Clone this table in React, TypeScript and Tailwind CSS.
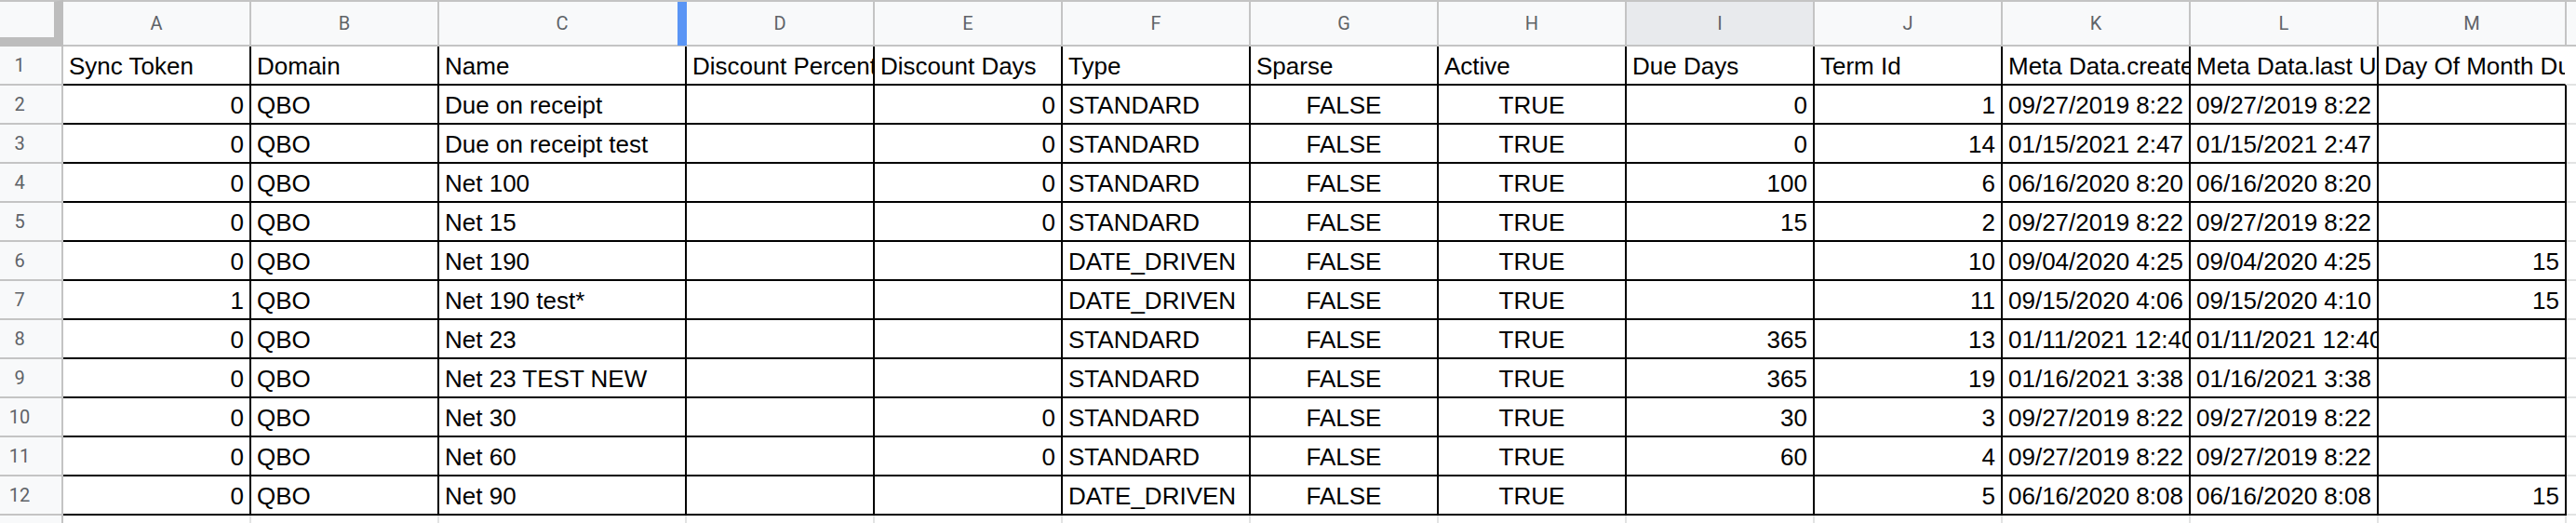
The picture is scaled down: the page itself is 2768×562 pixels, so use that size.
import React from 'react';

type ColDef = { letter: string; w: string; j: string };

const cols: ColDef[] = [
  { letter: 'A', w: 'w-[202px]', j: 'justify-end' },
  { letter: 'B', w: 'w-[202px]', j: 'justify-start' },
  { letter: 'C', w: 'w-[266px]', j: 'justify-start' },
  { letter: 'D', w: 'w-[202px]', j: 'justify-end' },
  { letter: 'E', w: 'w-[202px]', j: 'justify-end' },
  { letter: 'F', w: 'w-[202px]', j: 'justify-start' },
  { letter: 'G', w: 'w-[202px]', j: 'justify-center' },
  { letter: 'H', w: 'w-[202px]', j: 'justify-center' },
  { letter: 'I', w: 'w-[202px]', j: 'justify-end' },
  { letter: 'J', w: 'w-[202px]', j: 'justify-end' },
  { letter: 'K', w: 'w-[202px]', j: 'justify-start' },
  { letter: 'L', w: 'w-[202px]', j: 'justify-start' },
  { letter: 'M', w: 'w-[202px]', j: 'justify-end' },
];

const headerRow = [
  'Sync Token',
  'Domain',
  'Name',
  'Discount Percent',
  'Discount Days',
  'Type',
  'Sparse',
  'Active',
  'Due Days',
  'Term Id',
  'Meta Data.createTime',
  'Meta Data.last UpdatedTime',
  'Day Of Month Due',
];

const rows: string[][] = [
  ['0', 'QBO', 'Due on receipt', '', '0', 'STANDARD', 'FALSE', 'TRUE', '0', '1', '09/27/2019 8:22', '09/27/2019 8:22', ''],
  ['0', 'QBO', 'Due on receipt test', '', '0', 'STANDARD', 'FALSE', 'TRUE', '0', '14', '01/15/2021 2:47', '01/15/2021 2:47', ''],
  ['0', 'QBO', 'Net 100', '', '0', 'STANDARD', 'FALSE', 'TRUE', '100', '6', '06/16/2020 8:20', '06/16/2020 8:20', ''],
  ['0', 'QBO', 'Net 15', '', '0', 'STANDARD', 'FALSE', 'TRUE', '15', '2', '09/27/2019 8:22', '09/27/2019 8:22', ''],
  ['0', 'QBO', 'Net 190', '', '', 'DATE_DRIVEN', 'FALSE', 'TRUE', '', '10', '09/04/2020 4:25', '09/04/2020 4:25', '15'],
  ['1', 'QBO', 'Net 190 test*', '', '', 'DATE_DRIVEN', 'FALSE', 'TRUE', '', '11', '09/15/2020 4:06', '09/15/2020 4:10', '15'],
  ['0', 'QBO', 'Net 23', '', '', 'STANDARD', 'FALSE', 'TRUE', '365', '13', '01/11/2021 12:40', '01/11/2021 12:40', ''],
  ['0', 'QBO', 'Net 23 TEST NEW', '', '', 'STANDARD', 'FALSE', 'TRUE', '365', '19', '01/16/2021 3:38', '01/16/2021 3:38', ''],
  ['0', 'QBO', 'Net 30', '', '0', 'STANDARD', 'FALSE', 'TRUE', '30', '3', '09/27/2019 8:22', '09/27/2019 8:22', ''],
  ['0', 'QBO', 'Net 60', '', '0', 'STANDARD', 'FALSE', 'TRUE', '60', '4', '09/27/2019 8:22', '09/27/2019 8:22', ''],
  ['0', 'QBO', 'Net 90', '', '', 'DATE_DRIVEN', 'FALSE', 'TRUE', '', '5', '06/16/2020 8:08', '06/16/2020 8:08', '15'],
];

function RowHeader({ n }: { n: number }) {
  return (
    <div className="w-[68px] shrink-0 h-full bg-[#f8f9fa] border-r-2 border-b-2 border-[#c4c4c4] flex items-center">
      <div className="w-[42px] text-center text-[20px] leading-none text-[#5f6368] font-['Roboto',Arial,sans-serif]">
        {n}
      </div>
    </div>
  );
}

function Cell({
  text,
  col,
  isHeader,
  noRight,
}: {
  text: string;
  col: ColDef;
  isHeader: boolean;
  noRight?: boolean;
}) {
  const j = isHeader ? 'justify-start' : col.j;
  const rb = noRight ? 'border-r-white' : 'border-r-black';
  return (
    <div
      className={`${col.w} ${j} ${rb} shrink-0 h-full flex items-end overflow-hidden border-r-2 border-b-2 border-b-black px-[6px] pb-[4px]`}
    >
      <span className="whitespace-nowrap shrink-0 leading-[30px]">{text}</span>
    </div>
  );
}

export default function App() {
  return (
    <div className="w-[2768px] h-[562px] overflow-hidden bg-white text-black text-[26px] font-['Liberation_Sans',Arial,sans-serif]">
      {/* Column header row */}
      <div className="flex h-[50px]">
        <div className="w-[68px] shrink-0 h-full bg-[#f8f9fa] border-[#bdbdbd] border-r-[10px] border-b-[10px] border-t-2 border-t-[#c4c4c4]" />
        {cols.map((c) => (
          <div
            key={c.letter}
            className={`${c.w} ${c.letter === 'I' ? 'bg-[#e8eaed]' : 'bg-[#f8f9fa]'} ${
              c.letter === 'C' ? 'relative' : ''
            } shrink-0 h-full border-t-2 border-r-2 border-b-2 border-[#c4c4c4] flex items-center justify-center text-[20px] leading-none text-[#5f6368] font-['Roboto',Arial,sans-serif]`}
          >
            {c.letter}
            {c.letter === 'C' && (
              <div className="absolute top-0 bottom-[-1px] right-[-2px] w-[10px] bg-[#5a95f5]" />
            )}
          </div>
        ))}
        <div className="flex-1 h-full bg-[#f8f9fa] border-t-2 border-b-2 border-[#c4c4c4]" />
      </div>

      {/* Row 1: field names */}
      <div className="flex h-[42px]">
        <RowHeader n={1} />
        {cols.map((c, i) => (
          <Cell key={c.letter} text={headerRow[i]} col={c} isHeader noRight={c.letter === 'M'} />
        ))}
        <div className="flex-1 h-full border-b-2 border-[#e2e3e3]" />
      </div>

      {/* Data rows */}
      {rows.map((r, ri) => (
        <div key={ri} className="flex h-[42px]">
          <RowHeader n={ri + 2} />
          {cols.map((c, i) => (
            <Cell key={c.letter} text={r[i]} col={c} isHeader={false} />
          ))}
          <div className="flex-1 h-full border-b-2 border-[#e2e3e3]" />
        </div>
      ))}

      {/* Partial row 13 */}
      <div className="flex h-[8px]">
        <div className="w-[68px] shrink-0 h-full bg-[#f8f9fa] border-r-2 border-[#c4c4c4]" />
        {cols.map((c) => (
          <div key={c.letter} className={`${c.w} shrink-0 h-full border-r-2 border-[#e2e3e3]`} />
        ))}
        <div className="flex-1 h-full" />
      </div>
    </div>
  );
}
